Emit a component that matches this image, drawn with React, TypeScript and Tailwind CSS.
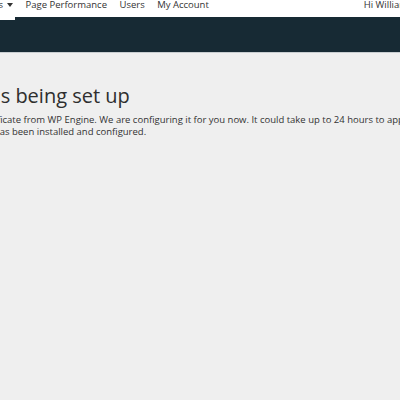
function Caret() {
  return (
    <svg width="6" height="4" viewBox="0 0 6 4" className="ml-[4px] mt-[5px]">
      <path d="M0 0h6L3 4z" fill="#333" />
    </svg>
  );
}

export default function App() {
  return (
    <div className="h-[400px] w-[400px] overflow-hidden bg-[#efefef] font-['Open_Sans',sans-serif] text-[#333]">
      <header className="-ml-[28px] -mr-[40px] flex h-[17px] items-start justify-between bg-white pr-[32px] text-[9.5px] leading-[14px]">
        <nav className="-mt-[2px] flex gap-[12.5px]">
          <span className="flex items-start">
            Installs
            <Caret />
          </span>
          <span>Page Performance</span>
          <span>Users</span>
          <span>My Account</span>
        </nav>
        <span className="-mt-[2px]">Hi William</span>
      </header>

      <div className="flex h-[36px] border-b border-[#c9ced1] bg-[#172a34]">
        <div className="h-[3px] w-[15px] bg-white" />
      </div>

      <main className="-ml-[188px] pt-[31px]">
        <h1 className="whitespace-nowrap text-[20px] font-normal leading-[24px] text-[#2e2e2e]">
          Your SSL certificate is being set up
        </h1>
        <div className="mt-[6px] whitespace-nowrap text-[9.5px] leading-[12px]">
          <p className="pl-[5px]">
            Thanks! You have purchased an SSL certificate from WP Engine. We are configuring it for you now. It could take up to 24 hours to appear on your site.
          </p>
          <p className="pl-[12px]">You'll get an email once the certificate has been installed and configured.</p>
        </div>
      </main>
    </div>
  );
}
